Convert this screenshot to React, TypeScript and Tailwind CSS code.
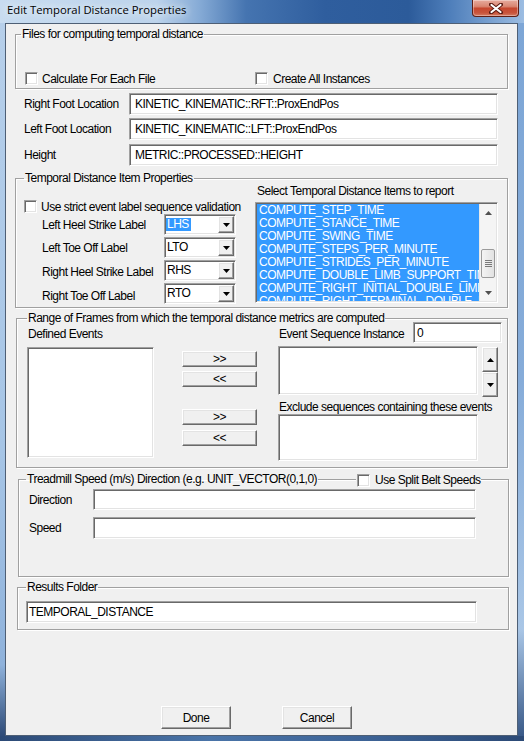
import React from "react";

const F = "font-['Liberation_Sans',Arial,sans-serif]";
const sunkenBorder =
  "border border-t-[#a0a0a0] border-l-[#a0a0a0] border-b-white border-r-white shadow-[inset_1px_1px_0_#696969,inset_-1px_-1px_0_#e3e3e3]";
const sunken = `bg-white ${sunkenBorder}`;
const raised =
  "bg-[#f0f0f0] border border-t-white border-l-white border-b-[#696969] border-r-[#696969] shadow-[inset_-1px_-1px_0_#a0a0a0,inset_1px_1px_0_#e3e3e3]";
const etched = "border border-[#a0a0a0] shadow-[inset_1px_1px_0_#fff,1px_1px_0_#fff]";

function Tri({ up = false, color = "#000" }: { up?: boolean; color?: string }) {
  return (
    <svg width="7" height="4" viewBox="0 0 7 4">
      <path d={up ? "M0 4h7L3.5 0z" : "M0 0h7L3.5 4z"} fill={color} />
    </svg>
  );
}

function Check() {
  return <div className={`w-[13px] h-[13px] shrink-0 ${sunken}`} />;
}

function Group({
  title,
  className,
  legendClass,
  children,
}: {
  title: string;
  className: string;
  legendClass: string;
  children?: React.ReactNode;
}) {
  return (
    <fieldset className={`m-0 p-0 min-w-0 block ${etched} ${className}`}>
      <legend className={`px-[1px] leading-[14px] ${legendClass}`}>{title}</legend>
      {children}
    </fieldset>
  );
}

function Combo({ value, selected = false }: { value: string; selected?: boolean }) {
  return (
    <div className={`w-[72px] h-[21px] shrink-0 flex items-center p-[1px] ${sunken}`}>
      <div className="flex-1 h-full flex items-center">
        {selected ? (
          <span className="bg-[#3399ff] text-white leading-[13px] pl-[1px] pr-[2px]">{value}</span>
        ) : (
          <span className="leading-[13px] pl-[1px] -mt-[1px]">{value}</span>
        )}
      </div>
      <div className={`w-[16px] h-[17px] flex items-center justify-center ${raised}`}>
        <Tri />
      </div>
    </div>
  );
}

function Btn({ label, className = "" }: { label: string; className?: string }) {
  return (
    <div className={`flex items-center justify-center ${raised} ${className}`}>{label}</div>
  );
}

const items = [
  "COMPUTE_STEP_TIME",
  "COMPUTE_STANCE_TIME",
  "COMPUTE_SWING_TIME",
  "COMPUTE_STEPS_PER_MINUTE",
  "COMPUTE_STRIDES_PER_MINUTE",
  "COMPUTE_DOUBLE_LIMB_SUPPORT_TIME",
  "COMPUTE_RIGHT_INITIAL_DOUBLE_LIMB_SUPPORT_TIME",
  "COMPUTE_RIGHT_TERMINAL_DOUBLE_LIMB_SUPPORT_TIME",
];

function ScrollBar() {
  return (
    <div className="w-[17px] h-full bg-[#f4f4f4] border-l border-[#e8e8e8] flex flex-col items-center">
      <div className="h-[17px] w-full flex items-center justify-center">
        <Tri up color="#505050" />
      </div>
      <div className="flex-1 w-full relative">
        <div className="absolute left-[1px] top-[28px] w-[14px] h-[29px] rounded-[2px] border border-[#9b9b9b] bg-[linear-gradient(90deg,#f4f4f4,#e2e2e2)] flex flex-col items-center justify-center gap-[1px]">
          <div className="w-[7px] h-[1px] bg-[#7a7a7a]" />
          <div className="w-[7px] h-[1px] bg-[#7a7a7a]" />
          <div className="w-[7px] h-[1px] bg-[#7a7a7a]" />
          <div className="w-[7px] h-[1px] bg-[#7a7a7a]" />
        </div>
      </div>
      <div className="h-[17px] w-full flex items-center justify-center">
        <Tri color="#505050" />
      </div>
    </div>
  );
}

export default function App() {
  return (
    <div
      className={`w-[524px] h-[741px] flex flex-col overflow-hidden whitespace-nowrap bg-[#6f9bd0] ${F} text-[12px] tracking-[-0.5px] leading-[14px] text-black`}
    >
      {/* Title bar */}
      <div className="h-[23px] shrink-0 flex items-start bg-[linear-gradient(90deg,#c8dcf0_0%,#bcd3eb_30%,#86abd6_38%,#4574b0_47%,#2f5e9e_62%,#2c5b9a_78%,#4f7fbb_86%,#9cbde2_100%)]">
        <div className="pl-[7px] pt-[3px] font-['Open_Sans','Noto_Sans',sans-serif] tracking-normal text-[11.3px] leading-[14px] text-black [text-shadow:0_0_6px_#e8f1fb,0_0_10px_#e8f1fb]">
          Edit Temporal Distance Properties
        </div>
        <div className="ml-auto mr-[5px] w-[47px] h-[17px] rounded-b-[4px] border border-t-0 border-[#5e1f16] bg-[linear-gradient(180deg,#e7ab9e_0%,#d98672_40%,#c6472f_52%,#c8543b_80%,#d47a62_100%)] shadow-[inset_0_0_0_1px_rgba(255,255,255,0.35)] flex items-center justify-center">
          <svg width="14" height="11" viewBox="0 0 14 11">
            <path d="M2 1.5L12 9.5M12 1.5L2 9.5" stroke="#5a1a12" strokeWidth="4" strokeLinecap="round" />
            <path d="M2.5 2L11.5 9M11.5 2L2.5 9" stroke="#ffffff" strokeWidth="2.2" strokeLinecap="round" />
          </svg>
        </div>
      </div>

      <div className="flex-1 flex">
        <div className="w-[5px] bg-[linear-gradient(180deg,#b6cfea_0%,#a6c5e6_60%,#8fb2db_90%,#2e4b78_100%)]" />

        {/* Client area */}
        <div className="w-[513px] border border-[#4e5f75] bg-[#f0f0f0] flex flex-col">
          {/* Files group */}
          <Group
            title="Files for computing temporal distance"
            className="ml-[9px] mt-[3px] w-[493px] h-[62px]"
            legendClass="ml-[5px]"
          >
            <div className="flex items-center h-[13px] mt-[31px] pl-[9px]">
              <div className="w-[230px] flex items-center gap-[4px]">
                <Check />
                <span>Calculate For Each File</span>
              </div>
              <div className="flex items-center gap-[5px]">
                <Check />
                <span>Create All Instances</span>
              </div>
            </div>
          </Group>

          {/* Location rows */}
          <div className="ml-[18px] mt-[4px] flex items-center h-[22px]">
            <div className="w-[105px]">Right Foot Location</div>
            <div className={`w-[369px] h-[22px] pl-[5px] flex items-center ${sunken}`}>
              KINETIC_KINEMATIC::RFT::ProxEndPos
            </div>
          </div>
          <div className="ml-[18px] mt-[3px] flex items-center h-[22px]">
            <div className="w-[105px]">Left Foot Location</div>
            <div className={`w-[369px] h-[22px] pl-[5px] flex items-center ${sunken}`}>
              KINETIC_KINEMATIC::LFT::ProxEndPos
            </div>
          </div>
          <div className="ml-[18px] mt-[4px] flex items-center h-[22px]">
            <div className="w-[105px]">Height</div>
            <div className={`w-[369px] h-[22px] pl-[5px] flex items-center ${sunken}`}>
              METRIC::PROCESSED::HEIGHT
            </div>
          </div>

          {/* Temporal Distance Item Properties */}
          <Group
            title="Temporal Distance Item Properties"
            className="ml-[9px] mt-[5px] w-[493px] h-[137px]"
            legendClass="ml-[8px]"
          >
            <div className="flex">
              <div className="w-[238px] pl-[8px] flex flex-col">
                <div className="mt-[15px] h-[13px] flex items-center gap-[4px]">
                  <Check />
                  <span>Use strict event label sequence validation</span>
                </div>
                <div className="mt-[1px] h-[21px] pl-[18px] flex items-center">
                  <div className="w-[122px]">Left Heel Strike Label</div>
                  <Combo value="LHS" selected />
                </div>
                <div className="mt-[2px] h-[21px] pl-[18px] flex items-center">
                  <div className="w-[122px]">Left Toe Off Label</div>
                  <Combo value="LTO" />
                </div>
                <div className="mt-[2px] h-[21px] pl-[18px] flex items-center">
                  <div className="w-[122px] mt-[3px]">Right Heel Strike Label</div>
                  <Combo value="RHS" />
                </div>
                <div className="mt-[2px] h-[21px] pl-[18px] flex items-center">
                  <div className="w-[122px] mt-[5px]">Right Toe Off Label</div>
                  <Combo value="RTO" />
                </div>
              </div>
              <div className="pl-[1px] flex flex-col">
                <div className="pl-[2px] h-[13px] leading-[13px]">Select Temporal Distance Items to report</div>
                <div className={`mt-[4px] w-[243px] h-[101px] p-[1px] flex bg-[#3399ff] ${sunkenBorder}`}>
                  <div className="flex-1 overflow-hidden text-white leading-[13px] pl-[2px]">
                    {items.map((t) => (
                      <div key={t}>{t}</div>
                    ))}
                  </div>
                  <ScrollBar />
                </div>
              </div>
            </div>
          </Group>

          {/* Range of Frames */}
          <Group
            title="Range of Frames from which the temporal distance metrics are computed"
            className="ml-[10px] mt-[3px] w-[492px] h-[157px]"
            legendClass="ml-[10px]"
          >
            <div className="flex items-start -mt-[3px]">
              <div className="ml-[10px] w-[127px] flex flex-col">
                <div className="mt-[5px] pl-[1px]">Defined Events</div>
                <div className={`mt-[6px] h-[111px] ${sunken}`} />
              </div>
              <div className="ml-[28px] w-[75px] flex flex-col">
                <Btn label=">>" className="mt-[29px] h-[16px]" />
                <Btn label="<<" className="mt-[4px] h-[16px]" />
                <Btn label=">>" className="mt-[22px] h-[16px]" />
                <Btn label="<<" className="mt-[5px] h-[16px]" />
              </div>
              <div className="ml-[21px] w-[224px] flex flex-col">
                <div className="h-[21px] flex items-center">
                  <div className="pl-[1px] pt-[3px]">Event Sequence Instance</div>
                  <div className={`ml-auto w-[89px] h-[21px] pl-[3px] flex items-center ${sunken}`}>0</div>
                </div>
                <div className="mt-[3px] flex items-start">
                  <div className={`w-[200px] h-[49px] ${sunken}`} />
                  <div className="ml-[4px] mt-[1px] w-[16px] flex flex-col">
                    <div className={`h-[25px] flex items-center justify-center ${raised}`}>
                      <Tri up />
                    </div>
                    <div className={`h-[25px] flex items-center justify-center ${raised}`}>
                      <Tri />
                    </div>
                  </div>
                </div>
                <div className="mt-[3px] pl-[1px]">Exclude sequences containing these events</div>
                <div className={`w-[200px] h-[47px] ${sunken}`} />
              </div>
            </div>
          </Group>

          {/* Treadmill */}
          <div className="relative ml-[12px] mt-[4px] w-[491px]">
            <Group
              title="Treadmill Speed (m/s) Direction (e.g. UNIT_VECTOR(0,1,0)"
              className="w-full h-[105px]"
              legendClass="ml-[7px]"
            >
              <div className="pl-[10px] mt-[3px] h-[21px] flex items-center">
                <div className="w-[64px]">Direction</div>
                <div className={`w-[383px] h-[21px] ${sunken}`} />
              </div>
              <div className="pl-[10px] mt-[7px] h-[22px] flex items-center">
                <div className="w-[64px]">Speed</div>
                <div className={`w-[383px] h-[22px] ${sunken}`} />
              </div>
            </Group>
            <div className="absolute top-[1px] left-[338px] pl-[1px] bg-[#f0f0f0] flex items-center gap-[5px]">
              <Check />
              <span>Use Split Belt Speeds</span>
            </div>
          </div>

          {/* Results Folder */}
          <Group title="Results Folder" className="ml-[11px] mt-[3px] w-[492px] h-[50px]" legendClass="ml-[8px]">
            <div className={`ml-[8px] mt-[7px] w-[451px] h-[22px] pl-[2px] flex items-center ${sunken}`}>
              TEMPORAL_DISTANCE
            </div>
          </Group>

          {/* Buttons */}
          <div className="mt-[76px] ml-[155px] flex">
            <Btn label="Done" className="w-[70px] h-[23px]" />
            <Btn label="Cancel" className="ml-[51px] w-[70px] h-[23px]" />
          </div>
        </div>

        <div className="flex-1 bg-[linear-gradient(180deg,#7da6d6_0%,#86acd9_50%,#a9c6e6_85%,#3a5a88_100%)]" />
      </div>
      <div className="h-[5px] shrink-0 bg-[linear-gradient(90deg,#2c4a76,#4a74a8_40%,#3d6396_70%,#2c4a76)]" />
    </div>
  );
}
